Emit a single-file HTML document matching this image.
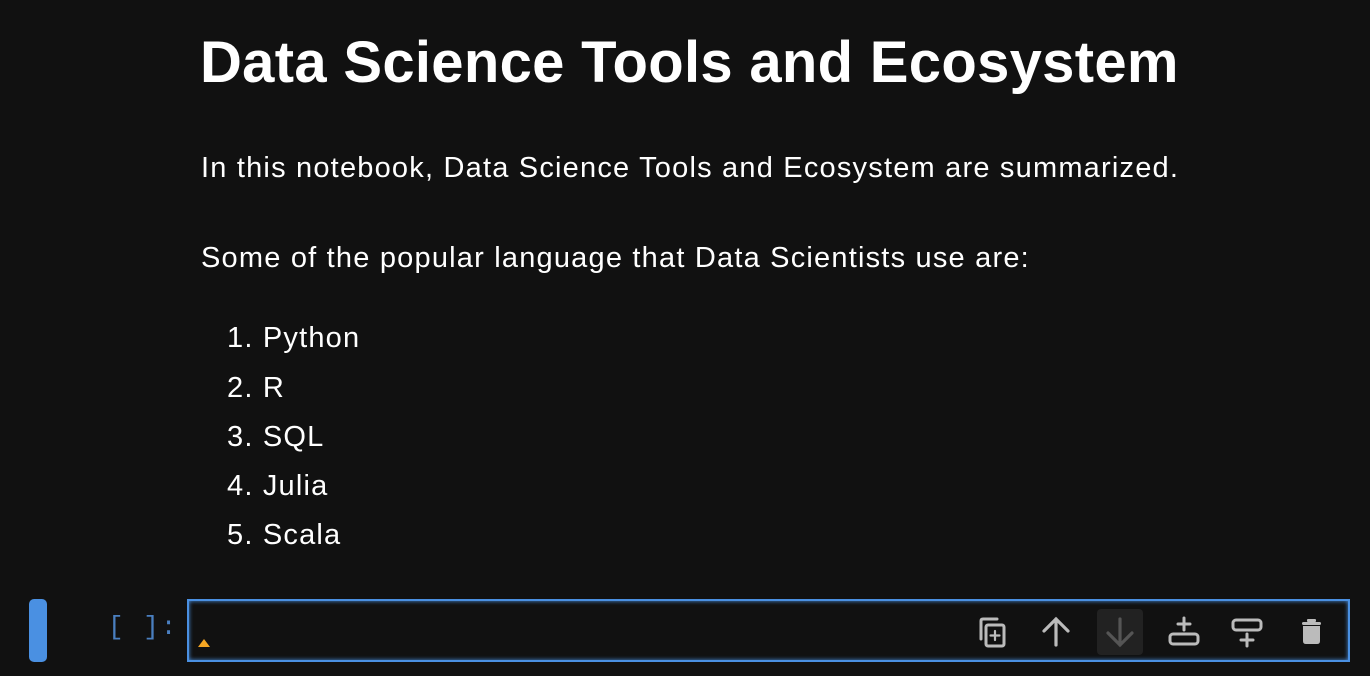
<!DOCTYPE html>
<html><head><style>
html,body{margin:0;padding:0;background:#111;width:1370px;height:676px;overflow:hidden;color:#fff;font-family:"Liberation Sans",sans-serif}
.t{position:absolute;left:201px;white-space:nowrap}
h1{position:absolute;left:200px;top:28px;margin:0;font-size:58px;font-weight:bold;letter-spacing:0.3px;line-height:70px}
.p{font-size:29px;line-height:32px;letter-spacing:1.2px}
.bar{position:absolute;left:29px;top:599px;width:18px;height:63px;background:#4a90e2;border-radius:5px}
.prompt{position:absolute;left:108px;top:612px;font-family:"Liberation Mono",monospace;color:#4a7fc0;font-size:26px;letter-spacing:2px}
.cell{position:absolute;left:187px;top:599px;width:1159px;height:59px;border:2px solid #4a90e2;box-shadow:inset 0 0 4px #4a90e2}
.tri{position:absolute;left:198px;top:639px;width:0;height:0;border-left:6px solid transparent;border-right:6px solid transparent;border-bottom:8px solid #f5a623}
.ic{position:absolute;top:609px;width:46px;height:46px}
</style></head><body>
<h1>Data Science Tools and Ecosystem</h1>
<div class="t p" style="top:152px">In this notebook, Data Science Tools and Ecosystem are summarized.</div>
<div class="t p" style="top:242px">Some of the popular language that Data Scientists use are:</div>
<div class="t p" style="left:227px;top:322px">1. Python</div>
<div class="t p" style="left:227px;top:372px">2. R</div>
<div class="t p" style="left:227px;top:421px">3. SQL</div>
<div class="t p" style="left:227px;top:470px">4. Julia</div>
<div class="t p" style="left:227px;top:519px">5. Scala</div>
<div class="bar"></div>
<div class="prompt">[ ]:</div>
<div class="cell"></div>
<div class="tri"></div>
<svg class="ic" style="left:970px" viewBox="0 0 46 46" fill="none" stroke="#bbb" stroke-width="3" stroke-linecap="round"><path d="M11 30V12q0-2 2-2h14"/><rect x="16" y="16" width="18" height="21" rx="2"/><path d="M25 22v9M20.5 26.5h9" stroke-width="2.2"/></svg>
<svg class="ic" style="left:1033px" viewBox="0 0 46 46" fill="none" stroke="#bbb" stroke-width="3.2" stroke-linecap="round"><path d="M23 36V10M11 22l12-12 12 12"/></svg>
<div class="ic" style="left:1097px;background:#222;border-radius:4px"></div>
<svg class="ic" style="left:1097px" viewBox="0 0 46 46" fill="none" stroke="#555" stroke-width="3.2" stroke-linecap="round"><path d="M23 10v26M11 24l12 12 12-12"/></svg>
<svg class="ic" style="left:1161px" viewBox="0 0 46 46" fill="none" stroke="#bbb" stroke-width="3" stroke-linecap="round"><rect x="9" y="25" width="28" height="10" rx="3"/><path d="M23 9v12M17 15h12"/></svg>
<svg class="ic" style="left:1224px" viewBox="0 0 46 46" fill="none" stroke="#bbb" stroke-width="3" stroke-linecap="round"><rect x="9" y="11" width="28" height="10" rx="3"/><path d="M23 25v12M17 31h12"/></svg>
<svg class="ic" style="left:1288px" viewBox="0 0 46 46"><rect x="14" y="13" width="19" height="3" rx="1.5" fill="#bbb"/><rect x="19" y="10" width="9" height="3" rx="1" fill="#bbb"/><path d="M15 17h17v15q0 3-3 3h-11q-3 0-3-3z" fill="#bbb"/></svg>
</body></html>
